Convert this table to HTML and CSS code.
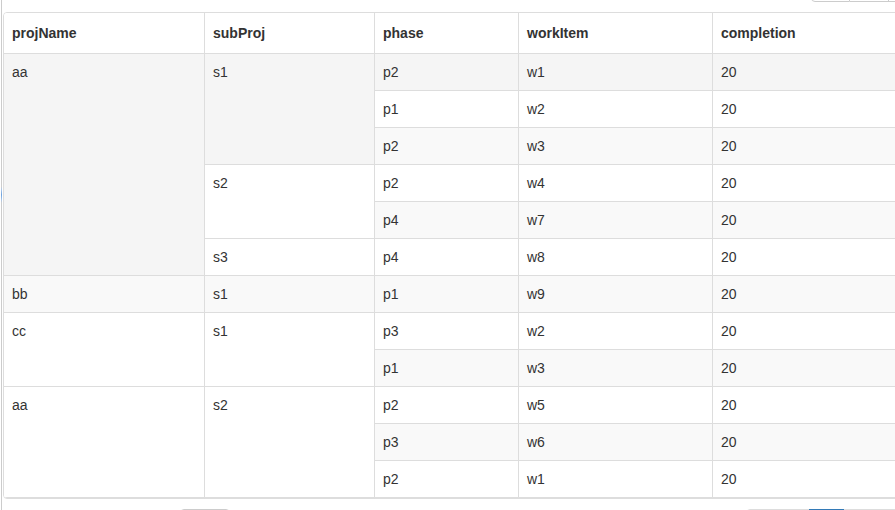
FILE: index.html
```html
<!DOCTYPE html>
<html>
<head>
<meta charset="utf-8">
<link rel="stylesheet" href="styles.css">
</head>
<body>
<div class="frame">
  <div class="toolbar">
    <div class="btn-group">
      <span class="btn b1"></span><span class="btn b2"></span><span class="btn b3"></span>
    </div>
  </div>
  <div class="table-container">
    <table class="grid">
      <thead>
        <tr>
          <th class="first c1">projName</th>
          <th class="c2">subProj</th>
          <th class="c3">phase</th>
          <th class="c4">workItem</th>
          <th class="c5">completion</th>
        </tr>
      </thead>
      <tbody>
        <tr class="hover">
          <td class="first" rowspan="6">aa</td>
          <td rowspan="3">s1</td>
          <td>p2</td><td>w1</td><td>20</td>
        </tr>
        <tr><td>p1</td><td>w2</td><td>20</td></tr>
        <tr class="odd"><td>p2</td><td>w3</td><td>20</td></tr>
        <tr>
          <td rowspan="2">s2</td>
          <td>p2</td><td>w4</td><td>20</td>
        </tr>
        <tr class="odd"><td>p4</td><td>w7</td><td>20</td></tr>
        <tr><td>s3</td><td>p4</td><td>w8</td><td>20</td></tr>
        <tr class="odd"><td class="first">bb</td><td>s1</td><td>p1</td><td>w9</td><td>20</td></tr>
        <tr>
          <td class="first" rowspan="2">cc</td>
          <td rowspan="2">s1</td>
          <td>p3</td><td>w2</td><td>20</td>
        </tr>
        <tr class="odd"><td>p1</td><td>w3</td><td>20</td></tr>
        <tr>
          <td class="first" rowspan="3">aa</td>
          <td rowspan="3">s2</td>
          <td>p2</td><td>w5</td><td>20</td>
        </tr>
        <tr class="odd"><td>p3</td><td>w6</td><td>20</td></tr>
        <tr><td>p2</td><td>w1</td><td>20</td></tr>
      </tbody>
    </table>
  </div>
  <div class="pager">
    <span class="page-size"></span>
    <ul class="pagination">
      <li class="p1"></li><li class="p2"></li><li class="p3 active"></li><li class="p4"></li><li class="p5"></li>
    </ul>
  </div>
</div>
</body>
</html>
```
FILE: styles.css
```css
html, body {
  margin: 0;
  padding: 0;
  background: #fff;
  overflow: hidden;
  height: 510px;
}

body {
  font-family: "Liberation Sans", Arial, sans-serif;
  font-size: 14px;
  color: #333;
}

.frame {
  margin-left: 1px;
  padding-left: 1px;
  border-left: 1px solid #cccccc;
  border-image: linear-gradient(to bottom, #cccccc 0, #cccccc 187px, #a9c6e8 190px, #6fa2dc 195px, #a9c6e8 200px, #cccccc 203px, #cccccc 100%) 1;
  width: 940px;
  height: 510px;
}

.toolbar {
  height: 12px;
  display: flex;
}

.btn-group {
  display: flex;
  margin-left: 808px;
  margin-top: -34px;
  height: 36px;
}

.btn {
  display: block;
  height: 34px;
  border: 1px solid #ccc;
  background: #fff;
}

.b1 { width: 37px; border-radius: 0 0 0 4px; }
.b2 { width: 38px; border-left: 0; }
.b3 { width: 60px; border-left: 1px solid #ccc; margin-left: 0; }
.b2 { border-right: 0; }

.table-container {
  border: 1px solid #ddd;
  border-radius: 4px;
  width: 935px;
  overflow: hidden;
}

.grid {
  border-collapse: separate;
  border-spacing: 0;
  table-layout: fixed;
  width: 100%;
}

.grid th,
.grid td {
  box-sizing: border-box;
  text-align: left;
  vertical-align: top;
  border-left: 1px solid #ddd;
  border-bottom: 1px solid #ddd;
}

.grid th.first,
.grid td.first {
  border-left: 0;
}

.grid th {
  font-weight: bold;
  padding: 8px;
  line-height: 24px;
  background: #fff;
}

.grid td {
  padding: 8px;
  line-height: 20px;
  background: #fff;
}

.c1 { width: 200px; }
.c2 { width: 170px; }
.c3 { width: 144px; }
.c4 { width: 194px; }

.grid tr.odd > td { background: #f9f9f9; }
.grid tr.hover > td { background: #f5f5f5; }

.pager {
  display: flex;
  align-items: flex-start;
  margin-top: 10px;
}

.page-size {
  display: block;
  margin-left: 177px;
  width: 48px;
  height: 32px;
  border: 1px solid #ccc;
  border-radius: 4px;
}

.pagination {
  display: flex;
  list-style: none;
  margin: 0 0 0 516px;
  padding: 0;
}

.pagination li {
  display: block;
  height: 32px;
  border: 1px solid #ddd;
  margin-left: -1px;
  background: #fff;
}

.pagination .p1 { width: 31px; margin-left: 0; border-radius: 4px 0 0 4px; }
.pagination .p2 { width: 30px; }
.pagination .p3 { width: 33px; }
.pagination .p4 { width: 32px; }
.pagination .p5 { width: 32px; }

.pagination .active {
  background: #337ab7;
  border-color: #337ab7;
  position: relative;
}
```
